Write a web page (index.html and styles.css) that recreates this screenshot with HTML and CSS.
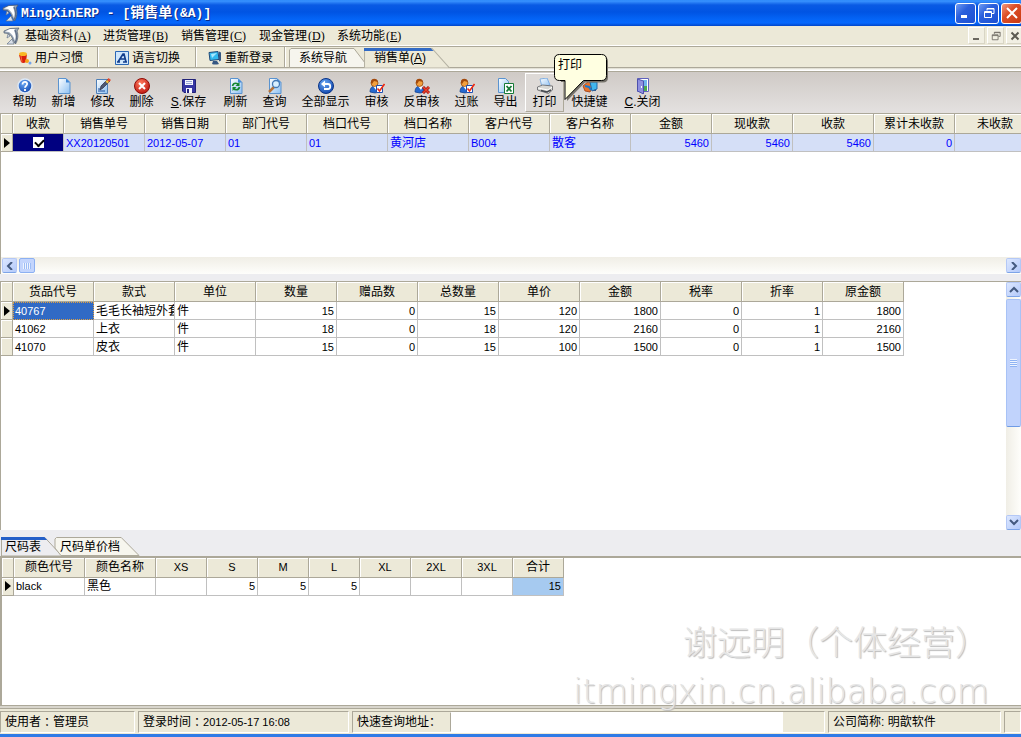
FILE: index.html
```html
<!DOCTYPE html>
<html lang="zh-CN">
<head>
<meta charset="utf-8">
<title>MingXinERP - [销售单(&amp;A)]</title>
<link rel="stylesheet" href="styles.css">
</head>
<body>
<svg class="defs" aria-hidden="true">
  <defs>
    <linearGradient id="paper" x1="0" y1="0" x2="1" y2="1"><stop offset="0" stop-color="#fff"/><stop offset="1" stop-color="#8dc0f2"/></linearGradient>
    <radialGradient id="ball" cx=".4" cy=".3" r=".8"><stop offset="0" stop-color="#6aa8f5"/><stop offset="1" stop-color="#0a3fa8"/></radialGradient>
    <radialGradient id="redball" cx=".4" cy=".3" r=".8"><stop offset="0" stop-color="#ff7a5c"/><stop offset="1" stop-color="#b80f0a"/></radialGradient>
    <symbol id="shark" viewBox="0 0 17 18">
      <path d="M1 4L7 1.500 16 1l-2 3c1.500 4 1 9-1.500 13L10 13c-1-3-2-5-4.500-6.500L1 6z" fill="#9dabbb" stroke="#4c5a70" stroke-width=".7"/>
      <path d="M2 4.500L7 2l5 0c-1 1-1 2 0 4 1 3 1 6 0 8-1-4-3-7-6-9z" fill="#fff"/>
      <path d="M12 3c2 4 2.500 8 0 13" fill="none" stroke="#5d6d84" stroke-width="1.200"/>
      <path d="M9 12l-5 5h7zM5 7l-1 4 3-2z" fill="#d9e0e8" stroke="#68778d" stroke-width=".7"/>
    </symbol>
    <symbol id="page" viewBox="0 0 16 16"><path d="M2.500.5h7.500l4 4v11h-11.500z" fill="url(#paper)" stroke="#5a93cf"/><path d="M10 .5v4h4z" fill="#3f86d6"/></symbol>
    <symbol id="person" viewBox="0 0 16 16"><path d="M1 14c0-5 3-6 5-6s5 1 5 6q-5 2-10 0z" fill="#2468cf" stroke="#123d88" stroke-width=".7"/><path d="M4 8l3 4 2-4z" fill="#fff"/><circle cx="5.500" cy="5" r="3.500" fill="#f3a03e" stroke="#8a4107" stroke-width=".7"/><path d="M2 5c-1-5 6-6 7-1L5 3 3 6z" fill="#a34a0c"/></symbol>
    <symbol id="audit" viewBox="0 0 16 16"><use href="#person"/><path d="M7.500 7.500h6v7h-6z" fill="#fff" stroke="#1e50b3"/><path d="M8.500 10.500l2 2.500L15.500 6" fill="none" stroke="#f02a10" stroke-width="1.600"/></symbol>
    <symbol id="restore" viewBox="0 0 12 12"><path d="M4 3.500V1.500h7v5H9M4 2h7" fill="none" stroke="currentColor"/><path d="M1.500 4.500h7v6h-7zM1.500 5.500h7" fill="none" stroke="currentColor"/></symbol>
    <symbol id="left" viewBox="0 0 8 8"><path d="M6 0L2 4l4 4" fill="none" stroke="#43597f" stroke-width="2"/></symbol>
    <symbol id="right" viewBox="0 0 8 8"><path d="M2 0l4 4-4 4" fill="none" stroke="#43597f" stroke-width="2"/></symbol>
    <symbol id="up" viewBox="0 0 10 8"><path d="M1 6l4-4 4 4" fill="none" stroke="#43597f" stroke-width="2"/></symbol>
    <symbol id="down" viewBox="0 0 10 8"><path d="M1 2l4 4 4-4" fill="none" stroke="#43597f" stroke-width="2"/></symbol>
    <symbol id="mark" viewBox="0 0 6 10"><path d="M0 0l6 5-6 5z" fill="#000"/></symbol>
  </defs>
</svg>

<div class="window">
  <header class="titlebar">
    <svg class="logo"><use href="#shark"/></svg>
    <h1 class="title">MingXinERP - [<span class="title-cjk">销售单</span>(&amp;A)]</h1>
    <div class="winbtns">
      <button class="winbtn" aria-label="最小化"><svg class="wicon" viewBox="0 0 12 12"><path d="M1 9.500h6" stroke="#fff" stroke-width="3"/></svg></button>
      <button class="winbtn" aria-label="还原"><svg class="wicon"><use href="#restore"/></svg></button>
      <button class="winbtn winbtn-close" aria-label="关闭"><svg class="wicon" viewBox="0 0 12 12"><path d="M1 1l10 10M11 1L1 11" stroke="#fff" stroke-width="2"/></svg></button>
    </div>
  </header>

  <nav class="menubar">
    <svg class="logo"><use href="#shark"/></svg>
    <button class="menu">基础资料<span class="key">(<u>A</u>)</span></button>
    <button class="menu">进货管理<span class="key">(<u>B</u>)</span></button>
    <button class="menu">销售管理<span class="key">(<u>C</u>)</span></button>
    <button class="menu">现金管理<span class="key">(<u>D</u>)</span></button>
    <button class="menu">系统功能<span class="key">(<u>E</u>)</span></button>
    <div class="mdibtns">
      <button class="mdibtn" aria-label="最小化窗口"><svg class="micon" viewBox="0 0 10 10"><path d="M1 8h6" stroke="#6b6860" stroke-width="2"/></svg></button>
      <button class="mdibtn" aria-label="还原窗口"><svg class="micon"><use href="#restore"/></svg></button>
      <button class="mdibtn" aria-label="关闭窗口"><svg class="micon" viewBox="0 0 10 10"><path d="M1.500 1.500l7 7M8.500 1.500l-7 7" stroke="#5c5a52" stroke-width="2"/></svg></button>
    </div>
  </nav>

  <div class="tabbar">
    <button class="quick quick-first"><svg class="qicon" viewBox="0 0 14 14"><path d="M1 4l8-1-1 8q-3 2-5 0z" fill="#d9200f"/><ellipse cx="5" cy="3" rx="4" ry="2" fill="#f9b825"/><path d="M3 5l1 6" stroke="#fa6a3c"/><circle cx="9" cy="10" r="2" fill="#f6a21b"/><circle cx="12" cy="12" r="1.500" fill="#74a4ec"/></svg>用户习惯</button>
    <button class="quick"><svg class="qicon" viewBox="0 0 14 14"><path d="M.5.5h13v13H.5z" fill="#cfe6fb" stroke="#2b67b5"/><path d="M3 11l5-8h1l2 8M5 8h5M2 11h3M8 11h4" fill="none" stroke="#123e8c" stroke-width="1.700"/></svg>语言切换</button>
    <button class="quick"><svg class="qicon" viewBox="0 0 14 14"><path d="M1 1.500L10 .5l1 8-9 1z" fill="#31b8ee" stroke="#214a78"/><path d="M3 3l6-1-5 5z" fill="#a5e8ff"/><path d="M11 .5l2 1v8l-2 1zM5 10h4l2 3q-4 1-7 0z" fill="#355783"/></svg>重新登录</button>
    <div class="doctabs" role="tablist">
      <button class="doctab" role="tab" aria-selected="false"><svg class="tabshape" viewBox="0 0 80 20" preserveAspectRatio="none"><path d="M.5 19.500V2L2 .5h63L79.500 19.500z" fill="#f6f5ee" stroke="#aca899"/></svg><span class="tabtext">系统导航</span></button>
      <button class="doctab doctab-on" role="tab" aria-selected="true"><svg class="tabshape" viewBox="0 0 84 20" preserveAspectRatio="none"><path d="M.5 20V.5h66L83.500 20z" fill="#ece9d8" stroke="#b5b2a3"/><path d="M0 0h65l3 3H0z" fill="#316ac5"/></svg><span class="tabtext">销售单(<u>A</u>)</span></button>
    </div>
  </div>

  <div class="toolbar">
    <button class="tool"><svg class="icon" viewBox="0 0 16 16"><circle cx="8" cy="8" r="7" fill="url(#ball)" stroke="#dce8f6" stroke-width="1.500"/><path d="M5.500 6.500c0-4 5.500-3 4.500 0C9.500 8 8 8 8 9.800M8 11v2" fill="none" stroke="#fff" stroke-width="1.800"/></svg>帮助</button>
    <button class="tool"><svg class="icon"><use href="#page"/></svg>新增</button>
    <button class="tool"><svg class="icon" viewBox="0 0 16 16"><path d="M1.500 1.500h11v14h-11z" fill="url(#paper)" stroke="#4d7fb8"/><path d="M5 12l1-4 7-7 2 2-7 7z" fill="#4d5872" stroke="#262b42" stroke-width=".7"/><path d="M12 2l1.500-2L16 2l-2 2z" fill="#e5482d"/><path d="M10.500 3.500L12 2l2 2-1.500 1.500z" fill="#f5c13c"/><path d="M3 11h2M3 13h7" stroke="#1c4e9c"/></svg>修改</button>
    <button class="tool"><svg class="icon" viewBox="0 0 16 16"><circle cx="8" cy="8" r="7.500" fill="url(#redball)" stroke="#8f0d08"/><path d="M5 5l6 6M11 5l-6 6" stroke="#fff" stroke-width="2"/></svg>删除</button>
    <button class="tool tool-key"><svg class="icon" viewBox="0 0 16 16"><path d="M2 1.500h12.500v13H3L1.500 13V1.500z" fill="#3636a4" stroke="#222278"/><path d="M4 2h8v5H4zM5 10h6v5H5z" fill="#f5f6ff"/><path d="M5 3.500h6M5 5.500h6" stroke="#9ba8d8"/><path d="M6 11h2v4H6z" fill="#25257e"/></svg><span><u>S</u>.保存</span></button>
    <button class="tool"><svg class="icon" viewBox="0 0 16 16"><use href="#page"/><path d="M4.500 8c1-4 5-3 6-1M11.500 9c-1 4-5 3-6 1" fill="none" stroke="#14872f" stroke-width="1.700"/><path d="M11.500 4v4h-4zM4.500 13V9h4z" fill="#14872f"/></svg>刷新</button>
    <button class="tool"><svg class="icon" viewBox="0 0 16 16"><use href="#page"/><path d="M7 9l-5 5" stroke="#b8743a" stroke-width="2.500"/><circle cx="9" cy="6" r="3.500" fill="#d8efff" stroke="#4479b4" stroke-width="1.300"/></svg>查询</button>
    <button class="tool tool-4"><svg class="icon" viewBox="0 0 16 16"><circle cx="8" cy="8" r="7.500" fill="url(#ball)" stroke="#093386"/><path d="M6 6h4c3 0 3 5 0 5H6" fill="none" stroke="#fff" stroke-width="1.800"/><path d="M7 2.500v7L3 6z" fill="#fff"/></svg>全部显示</button>
    <button class="tool"><svg class="icon"><use href="#audit"/></svg>审核</button>
    <button class="tool tool-3"><svg class="icon" viewBox="0 0 16 16"><use href="#person"/><path d="M9 9l6 6M15 9l-6 6" stroke="#9e120a" stroke-width="3"/><path d="M9 9l6 6M15 9l-6 6" stroke="#e8412b" stroke-width="1.500"/></svg>反审核</button>
    <button class="tool"><svg class="icon"><use href="#audit"/></svg>过账</button>
    <button class="tool"><svg class="icon" viewBox="0 0 16 16"><path d="M.5.5h7l3 3v11H.5z" fill="url(#paper)" stroke="#5a93cf"/><path d="M6.500 5.500h9v10h-9z" fill="#fff" stroke="#177a37"/><path d="M8.500 8l5 5.500M13.500 8l-5 5.500" stroke="#177a37" stroke-width="1.800"/></svg>导出</button>
    <div class="tool-wrap">
      <button class="tool tool-hot" aria-describedby="tip"><svg class="icon" viewBox="0 0 16 16"><path d="M3 1l7-1 3 7-8 2z" fill="url(#paper)" stroke="#6ba2df" stroke-width=".8"/><path d="M.5 9l5-2 10 1v4l-4 3.500L.5 12z" fill="#d8d8d4" stroke="#5f6165" stroke-width=".8"/><path d="M1 10l10 2 4-3" fill="none" stroke="#fff"/><path d="M4 12.500l6 1.500 4-2" fill="none" stroke="#464a50" stroke-width="1.500"/></svg>打印</button>
      <div class="tip" id="tip" role="tooltip">
        <svg class="tip-shape" viewBox="0 0 56 49"><path d="M7 2.500h42q5 0 5 5v16q0 5-5 5H31L13 47V28H7z" fill="#77746c"/><path d="M5.500.5h42q5 0 5 5v16q0 5-5 5H29.500L11 45.500V26.500H5.500q-5 0-5-5v-16q0-5 5-5z" fill="#ffffe1" stroke="#000"/></svg>
        <span class="tip-text">打印</span>
      </div>
    </div>
    <button class="tool tool-3"><svg class="icon" viewBox="0 0 16 16"><path d="M1 8l6-5 4 5-3 6-5-1z" fill="#e8732a" stroke="#9b3b12" stroke-width=".8"/><path d="M8 4h7v7l-5 2z" fill="#40b6ee" stroke="#2068a8"/><path d="M3 8l4 1 2 3" fill="none" stroke="#187ad0" stroke-width="2"/><path d="M10 13l4-2v2z" fill="#335b91"/></svg>快捷键</button>
    <button class="tool tool-key"><svg class="icon" viewBox="0 0 16 16"><path d="M2.500.5h11v13h-11z" fill="#fff" stroke="#6062bd"/><path d="M8 2h4v11H8z" fill="#70b7ed"/><path d="M8 8h4v5H8z" fill="#4cad4f"/><path d="M2.500 1l6 2v13l-6-3z" fill="#8f90df" stroke="#4d50ad"/><path d="M6.500 8v2" stroke="#fff"/></svg><span><u>C</u>.关闭</span></button>
  </div>

  <section class="pane pane-orders">
    <div class="sheet">
      <table class="grid">
        <colgroup><col class="c-mark"><col class="c-51"><col class="c-81" span="12"></colgroup>
        <thead><tr><th></th><th>收款</th><th>销售单号</th><th>销售日期</th><th>部门代号</th><th>档口代号</th><th>档口名称</th><th>客户代号</th><th>客户名称</th><th>金额</th><th>现收款</th><th>收款</th><th>累计未收款</th><th>未收款</th></tr></thead>
        <tbody><tr class="row-blue"><th><svg class="mark"><use href="#mark"/></svg></th><td class="cell-check"><input type="checkbox" class="check" checked aria-label="收款"></td><td class="lat">XX20120501</td><td class="lat">2012-05-07</td><td class="lat">01</td><td class="lat">01</td><td>黄河店</td><td class="lat">B004</td><td>散客</td><td class="num">5460</td><td class="num">5460</td><td class="num">5460</td><td class="num">0</td><td></td></tr></tbody>
      </table>
    </div>
    <div class="hscroll">
      <button class="sbtn" aria-label="向左"><svg class="arrow"><use href="#left"/></svg></button>
      <div class="hthumb"></div>
      <button class="sbtn sbtn-end" aria-label="向右"><svg class="arrow"><use href="#right"/></svg></button>
    </div>
  </section>

  <div class="splitter"></div>

  <section class="pane pane-items">
    <div class="sheet">
      <table class="grid">
        <colgroup><col class="c-mark"><col class="c-81" span="11"></colgroup>
        <thead><tr><th></th><th>货品代号</th><th>款式</th><th>单位</th><th>数量</th><th>赠品数</th><th>总数量</th><th>单价</th><th>金额</th><th>税率</th><th>折率</th><th>原金额</th></tr></thead>
        <tbody>
          <tr><th><svg class="mark"><use href="#mark"/></svg></th><td class="lat cell-sel">40767</td><td>毛毛长袖短外套</td><td>件</td><td class="num">15</td><td class="num">0</td><td class="num">15</td><td class="num">120</td><td class="num">1800</td><td class="num">0</td><td class="num">1</td><td class="num">1800</td></tr>
          <tr><th></th><td class="lat">41062</td><td>上衣</td><td>件</td><td class="num">18</td><td class="num">0</td><td class="num">18</td><td class="num">120</td><td class="num">2160</td><td class="num">0</td><td class="num">1</td><td class="num">2160</td></tr>
          <tr><th></th><td class="lat">41070</td><td>皮衣</td><td>件</td><td class="num">15</td><td class="num">0</td><td class="num">15</td><td class="num">100</td><td class="num">1500</td><td class="num">0</td><td class="num">1</td><td class="num">1500</td></tr>
        </tbody>
      </table>
    </div>
    <div class="vscroll">
      <button class="sbtn" aria-label="向上"><svg class="arrow"><use href="#up"/></svg></button>
      <div class="vtrack"><div class="vthumb"></div></div>
      <button class="sbtn" aria-label="向下"><svg class="arrow"><use href="#down"/></svg></button>
    </div>
  </section>

  <div class="sizetabs" role="tablist">
    <button class="sizetab" role="tab" aria-selected="true"><svg class="tabshape" viewBox="0 0 64 19" preserveAspectRatio="none"><path d="M.5 19V.5h44L62 19z" fill="#ededf0" stroke="#aca899"/><path d="M0 0h44l3 3H0z" fill="#2560c8"/></svg><span class="tabtext">尺码表</span></button>
    <button class="sizetab sizetab-2" role="tab" aria-selected="false"><svg class="tabshape" viewBox="0 0 88 19" preserveAspectRatio="none"><path d="M7 18.500L1 11V2L2.500.5H68L86 18.500z" fill="#f7f6ee" stroke="#aca899"/></svg><span class="tabtext">尺码单价档</span></button>
  </div>

  <section class="pane pane-sizes">
    <div class="sheet">
      <table class="grid">
        <colgroup><col class="c-mark"><col class="c-71" span="2"><col class="c-51" span="8"></colgroup>
        <thead><tr><th></th><th>颜色代号</th><th>颜色名称</th><th class="size">XS</th><th class="size">S</th><th class="size">M</th><th class="size">L</th><th class="size">XL</th><th class="size">2XL</th><th class="size">3XL</th><th>合计</th></tr></thead>
        <tbody><tr><th><svg class="mark"><use href="#mark"/></svg></th><td class="lat">black</td><td>黑色</td><td></td><td class="num">5</td><td class="num">5</td><td class="num">5</td><td></td><td></td><td></td><td class="num cell-total">15</td></tr></tbody>
      </table>
    </div>
  </section>

  <footer class="status">
    <div class="panel panel-user">使用者<span class="centred">：</span>管理员</div>
    <div class="panel panel-time">登录时间<span class="centred">：</span><span class="lat">2012-05-17 16:08</span></div>
    <div class="panel panel-query"><label class="query-label" for="q">快速查询地址：</label><input class="query" id="q" type="text"></div>
    <div class="panel panel-company">公司简称: 明歆软件</div>
    <div class="panel panel-end"></div>
  </footer>

  <div class="watermark"><p class="wm-name">谢远明<span class="centred">（</span>个体经营<span class="centred">）</span></p><p class="wm-site">itmingxin.cn.alibaba.com</p></div>
</div>
</body>
</html>
```
FILE: styles.css
```css
* { box-sizing: border-box; }

body {
  margin: 0;
  background: #fff;
  color: #000;
  font: 12px/16px "Liberation Sans", "Noto Sans CJK SC", sans-serif;
}

button {
  margin: 0;
  padding: 0;
  border: 0;
  background: none;
  color: inherit;
  font: inherit;
  white-space: nowrap;
}

svg { display: block; flex: none; }
.defs { position: absolute; width: 0; height: 0; }

.window {
  position: relative;
  display: flex;
  flex-direction: column;
  min-height: 100vh;
  overflow: hidden;
  border-bottom: 3px solid #2f7be6;
}

/* title bar */
.titlebar {
  display: flex;
  align-items: center;
  height: 26px;
  padding-left: 2px;
  background: linear-gradient(#2a86f8 0, #3a93ff 1px, #0a5ae4 5px, #0054e3 12px, #0464f6 19px, #0668fd 23px, #0145c8 26px);
}
.logo { width: 17px; height: 18px; }
.title {
  flex: 1;
  margin: 0 0 0 2px;
  color: #fff;
  font: bold 13px/18px "Liberation Mono", "Noto Sans CJK SC", monospace;
  text-shadow: 1px 1px #0a2a85;
}
.title-cjk { font-size: 14px; }
.winbtns { display: flex; gap: 2px; margin-right: -1px; }
.winbtn {
  display: grid;
  place-items: center;
  width: 21px;
  height: 21px;
  border: 1px solid #fff;
  border-radius: 3px;
  background: linear-gradient(135deg, #6f9bf3, #2a5fdc 40%, #1d50d3);
  color: #fff;
}
.winbtn-close { background: linear-gradient(135deg, #f09a80, #dd4e27 40%, #c83a12); }
.wicon { width: 12px; height: 12px; }

/* menu */
.menubar {
  display: flex;
  align-items: center;
  height: 20px;
  padding-left: 3px;
  background: #ece9d8;
  border-bottom: 1px solid #fff;
}
.menubar .logo { margin-right: 5px; }
.menu { width: 78px; text-align: left; }
.key { font-family: "Liberation Serif", serif; margin-left: 1px; }
.mdibtns { display: flex; gap: 2px; margin-left: auto; margin-right: -2px; }
.mdibtn {
  display: grid;
  place-items: center;
  width: 17px;
  height: 17px;
  border: 1px solid #fff;
  border-right-color: #d8d5c5;
  border-bottom-color: #d8d5c5;
  background: #f1efe3;
  color: #6b6860;
}
.micon { width: 10px; height: 10px; }

/* tab bar */
.tabbar {
  display: flex;
  height: 25px;
  padding-bottom: 3px;
  background: linear-gradient(#aca899 1px, #ece9d8 1px, #ece9d8 21px, #aca899 21px, #aca899 22px, #d9d6c8 22px, #fff 24px, #fff 25px);
}
.quick {
  display: flex;
  align-items: center;
  gap: 3px;
  width: 98px;
  margin: 1px 0;
  padding: 2px 0 0 17px;
  border-right: 1px solid #aca899;
  box-shadow: 1px 0 #fff;
}
.quick-first { padding-left: 18px; }
.quick:nth-child(3) { width: 89px; padding-left: 12px; }
.qicon { width: 14px; height: 14px; }
.doctabs { display: flex; margin-left: 4px; padding-top: 2px; }
.doctab { position: relative; width: 75px; height: 20px; text-align: left; }
.doctab:first-child { padding-left: 10px; }
.doctab:first-child .tabshape { width: 80px; }
.doctab-on { width: 86px; padding-left: 10px; }
.tabshape { position: absolute; top: 0; left: 0; width: 100%; height: 100%; }
.tabtext { position: relative; }

/* toolbar */
.toolbar {
  display: flex;
  padding: 1px 0 2px 5px;
  height: 42px;
  border-top: 1px solid #aca899;
  background: linear-gradient(#cfcac6, #e4e1e0);
}
.tool {
  display: flex;
  flex-direction: column;
  align-items: center;
  width: 39px;
  height: 39px;
  padding-top: 4px;
  border: 1px solid transparent;
}
.tool-3 { width: 51px; }
.tool-4 { width: 63px; }
.tool-key { width: 55px; }
.tool-hot { border-color: #fff #aca899 #aca899 #fff; background: #dedad7; }
.tool-wrap { position: relative; }
.icon { width: 16px; height: 16px; }
.tip { position: absolute; top: -19px; left: 29px; z-index: 2; width: 56px; height: 49px; }
.tip-shape { width: 56px; height: 49px; }
.tip-text { position: absolute; top: 3px; left: 4px; }

/* panes and grids */
.pane {
  display: flex;
  min-height: 0;
  border-top: 1px solid #aca899;
  border-left: 1px solid #aca899;
  background: #fff;
}
.pane-orders { flex: 162 1 0; flex-direction: column; }
.pane-items { flex: 250 1 0; }
.pane-sizes { flex: 149 1 0; border-width: 2px 0 0 2px; }
.sheet { flex: 1; min-width: 0; overflow: hidden; }
.splitter { height: 7px; background: #ededf0; }

.grid { width: 0; table-layout: fixed; border-collapse: separate; border-spacing: 0; }
.c-mark { width: 12px; }
.c-51 { width: 51px; }
.c-71 { width: 71px; }
.c-81 { width: 81px; }
.grid th, .grid td {
  overflow: hidden;
  padding: 0 2px;
  border-right: 1px solid #c0c0c0;
  border-bottom: 1px solid #c0c0c0;
  font-weight: normal;
  white-space: nowrap;
  text-overflow: clip;
}
.grid th {
  height: 20px;
  padding: 0;
  border-color: #aca899;
  background: #ece9d8;
  box-shadow: inset 1px 1px #fff;
}
.grid td, .grid tbody th { height: 18px; line-height: 16px; }
.lat, .grid td.num, .grid .size { font-size: 11px; }
.grid td.num { text-align: right; }
.mark { width: 6px; height: 10px; margin-left: 3px; }
.row-blue td { background: #d5dff7; color: #00f; }
.grid .cell-check { background: #000080; }
.check {
  appearance: none;
  display: block;
  width: 11px;
  height: 11px;
  margin: 0 auto;
  background: #fff;
}
.check:checked::before {
  content: "";
  display: block;
  width: 7px;
  height: 4px;
  margin: 0 2px;
  transform: translateY(2px) rotate(-45deg);
  border: solid #000;
  border-width: 0 0 2px 2px;
}
.grid .cell-sel { padding: 0 1px; border: 1px dotted #e0a040; background: #316ac5; color: #fff; }
.grid .cell-total { background: #a6caf0; }

/* scroll bars */
.hscroll { display: flex; gap: 2px; height: 17px; padding: 1px 0 1px 1px; background: linear-gradient(#f0eee6, #fefefb); }
.sbtn {
  display: grid;
  place-items: center;
  width: 15px;
  height: 15px;
  border: 1px solid #b4c8f6;
  border-bottom-color: #7da4e8;
  border-radius: 2px;
  background: linear-gradient(135deg, #dce7ff, #b4cafa);
}
.sbtn-end { margin-left: auto; }
.arrow { width: 10px; height: 8px; }
.hthumb {
  width: 16px;
  border: 1px solid #8cb0f2;
  border-radius: 2px;
  background: repeating-linear-gradient(90deg, #eef4ff 0 1px, #9dbdf5 1px 2px) center / 8px 6px no-repeat, #c3d5fd;
}
.vscroll { display: flex; flex-direction: column; width: 15px; background: linear-gradient(90deg, #f0eee6, #fefefb); }
.vtrack { flex: 1; padding: 2px 0; }
.vthumb {
  height: 60%;
  border: 1px solid #a8c2f6;
  border-bottom-color: #6f9be6;
  border-radius: 2px;
  background: repeating-linear-gradient(#eef4ff 0 1px, #8fb3f3 1px 2px) center / 7px 8px no-repeat, #c1d3fc;
}

/* size tabs */
.sizetabs { display: flex; padding: 7px 0 0 1px; background: #ededf0; }
.sizetab { position: relative; width: 53px; height: 19px; padding: 2px 0 0 4px; text-align: left; }
.sizetab:first-child .tabshape { width: 63px; }
.sizetab-2 { width: 87px; padding-left: 6px; }

/* status bar */
.status {
  display: flex;
  gap: 3px;
  height: 29px;
  padding: 5px 0 1px;
  border-top: 1px solid #aca899;
  background: linear-gradient(#d8d5cc 2px, #aca899 2px, #aca899 3px, #ece9d8 3px);
}
.panel {
  display: flex;
  align-items: center;
  padding-left: 4px;
  border: 1px solid;
  border-color: #aca899 #fff #fff #aca899;
  white-space: nowrap;
}
.panel-user { width: 135px; }
.panel-time { width: 211px; }
.panel-query { flex: 1; }
.panel-company { width: 173px; }
.panel-end { width: 17px; }
.centred { font-family: "Noto Sans CJK TC", sans-serif; }
.query-label { width: 93px; }
.query { flex: 1; min-width: 0; height: 20px; margin-right: 41px; padding: 0 4px; border: 1px solid #fff; border-left-color: #aca899; background: #fff; font: inherit; }

/* watermark */
.watermark {
  position: absolute;
  right: 32px;
  bottom: 16px;
  color: #e6e6e6;
  text-align: right;
  text-shadow: 1px 1px 1px #bbb;
  pointer-events: none;
}
.watermark p { margin: 0; }
.wm-name { font: 300 34px/50px "Noto Sans CJK SC", sans-serif; }
.wm-site { font: 200 33px/52px "DejaVu Sans", sans-serif; }
```
